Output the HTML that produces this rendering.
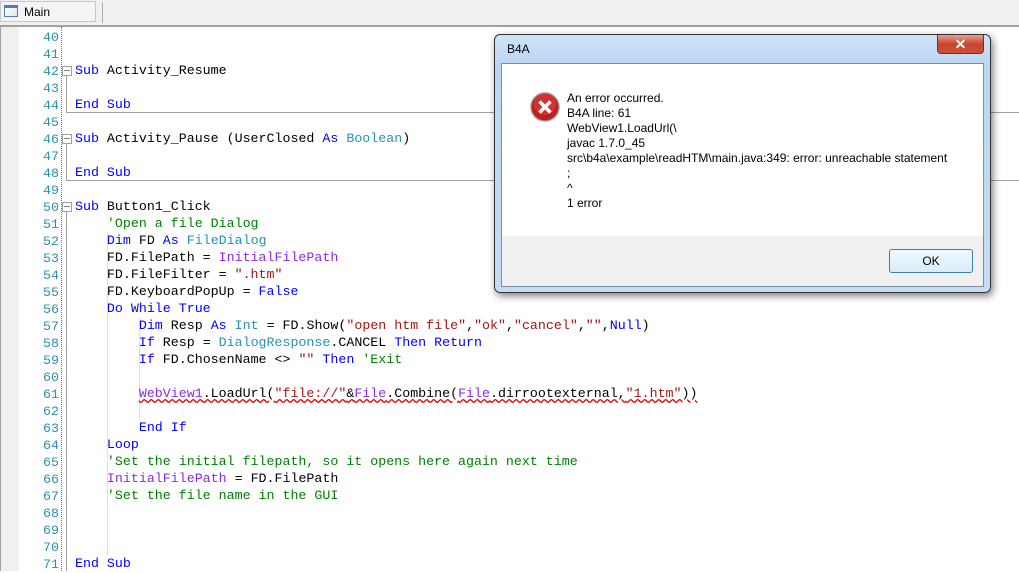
<!DOCTYPE html>
<html><head><meta charset="utf-8"><style>
body{margin:0;width:1019px;height:571px;overflow:hidden;background:#fff;position:relative;font-family:"Liberation Sans",sans-serif}
.tb{position:absolute;left:0;top:0;width:1019px;height:27px;background:#f0f0f0;border-bottom:2px solid #a0a0a0;box-sizing:border-box}
.tab{position:absolute;left:0;top:1px;width:96px;height:21px;border:1px solid #c8c8c8;background:#f4f4f4;box-sizing:border-box}
.tab span{position:absolute;left:23px;top:3px;font-size:12px;color:#000}
.tab i{position:absolute;left:3px;top:3px;width:14px;height:12px;border:1px solid #5a7ab0;border-top:3px solid #4a7ad0;background:linear-gradient(135deg,#fff,#dde4ee);box-sizing:border-box}
.strip{position:absolute;left:0;top:27px;width:19px;height:544px;background:#f0f0f0;border-left:1px solid #a0a0a0;box-sizing:border-box}
.ln{position:absolute;left:20px;width:39px;text-align:right;font:13.3px/17px "Liberation Mono",monospace;color:#2b91af}
.c{position:absolute;left:75px;font:13.3px/17px "Liberation Mono",monospace;color:#000;white-space:pre}
.dot{position:absolute;left:61px;top:27px;height:544px;border-left:1px dotted #2b9a9a}
.k{color:#0000ff}.t{color:#2b91af}.s{color:#a31515}.g{color:#008000}.p{color:#8a2be2}
.sep{position:absolute;left:66px;width:953px;border-top:1px solid #a0a0a0}
.vl{position:absolute;left:66px;border-left:1px solid #a0a0a0}
.fb{position:absolute;left:62px;width:8px;height:8px;border:1px solid #a0a0a0;background:#fff}
.fb:after{content:"";position:absolute;left:1px;top:3px;width:6px;border-top:1px solid #808080}
.ig{position:absolute;border-left:1px solid #e0e0e0}
.dlg{position:absolute;left:494px;top:34px;width:497px;height:259px;border-radius:6px;border:1px solid #333;background:linear-gradient(#cfe3f7,#bcd6f2 30px,#c5dcf3);box-shadow:2px 3px 8px rgba(0,0,0,.5);box-sizing:border-box}
.dlg .ti{position:absolute;left:12px;top:7px;font-size:12px}
.inner{position:absolute;left:6px;top:28px;width:483px;height:224px;background:#fff;border:1px solid #7a8fa8;box-sizing:border-box}
.bot{position:absolute;left:0;bottom:0;width:481px;height:50px;background:#f0f0f0}
.ok{position:absolute;left:387px;top:13px;width:84px;height:24px;border:1px solid #3c7fb1;border-radius:3px;background:linear-gradient(#f2f9fe,#d9ecf9);box-sizing:border-box;font-size:12px;text-align:center;line-height:22px}
.msg{position:absolute;left:65px;top:27px;font-size:12px;line-height:15px;color:#000;white-space:pre}
.x{position:absolute;left:442px;top:0;width:47px;height:19px;border:1px solid #7a2a22;border-top:none;border-radius:0 0 4px 4px;background:linear-gradient(#e8a090,#c9452f 50%,#d0503a);box-sizing:border-box;color:#fff;text-align:center;font:bold 14px/18px "Liberation Sans",sans-serif}
</style></head><body>
<div class="tb"><div class="tab"><i></i><span>Main</span></div><div style="position:absolute;left:102px;top:2px;height:21px;border-left:1px solid #b0b0b0"></div></div>
<div class="strip"></div>
<div class="dot"></div>
<div class="ln" style="top:29px">40<br>41<br>42<br>43<br>44<br>45<br>46<br>47<br>48<br>49<br>50<br>51<br>52<br>53<br>54<br>55<br>56<br>57<br>58<br>59<br>60<br>61<br>62<br>63<br>64<br>65<br>66<br>67<br>68<br>69<br>70<br>71</div>
<div class="fb" style="top:66px"></div><div class="vl" style="top:76px;height:36px"></div><div class="sep" style="top:112px"></div>
<div class="fb" style="top:134px"></div><div class="vl" style="top:144px;height:36px"></div><div class="sep" style="top:180px"></div>
<div class="fb" style="top:202px"></div><div class="vl" style="top:212px;height:359px"></div>
<div class="ig" style="left:107px;top:233px;height:320px"></div>
<div class="ig" style="left:139px;top:318px;height:100px"></div>
<div class="ig" style="left:107px;top:505px;height:50px"></div>
<div class="c" style="top:62px"><span class="k">Sub</span> Activity_Resume

<span class="k">End Sub</span>

<span class="k">Sub</span> Activity_Pause (UserClosed <span class="k">As</span> <span class="t">Boolean</span>)

<span class="k">End Sub</span>

<span class="k">Sub</span> Button1_Click
    <span class="g">'Open a file Dialog</span>
    <span class="k">Dim</span> FD <span class="k">As</span> <span class="t">FileDialog</span>
    FD.FilePath = <span class="p">InitialFilePath</span>
    FD.FileFilter = <span class="s">".htm"</span>
    FD.KeyboardPopUp = <span class="k">False</span>
    <span class="k">Do While True</span>
        <span class="k">Dim</span> Resp <span class="k">As</span> <span class="t">Int</span> = FD.Show(<span class="s">"open htm file"</span>,<span class="s">"ok"</span>,<span class="s">"cancel"</span>,<span class="s">""</span>,<span class="k">Null</span>)
        <span class="k">If</span> Resp = <span class="t">DialogResponse</span>.CANCEL <span class="k">Then Return</span>
        <span class="k">If</span> FD.ChosenName &lt;&gt; <span class="s">""</span> <span class="k">Then</span> <span class="g">'Exit</span>

        <span style="text-decoration:underline wavy #e00000"><span class="p">WebView1</span>.LoadUrl(<span class="s">"file://"</span>&amp;<span class="p">File</span>.Combine(<span class="p">File</span>.dirrootexternal,<span class="s">"1.htm"</span>))</span>

        <span class="k">End If</span>
    <span class="k">Loop</span>
    <span class="g">'Set the initial filepath, so it opens here again next time</span>
    <span class="p">InitialFilePath</span> = FD.FilePath
    <span class="g">'Set the file name in the GUI</span>



<span class="k">End Sub</span></div>
<div class="dlg"><div class="ti">B4A</div><div class="x">✕</div>
<div class="inner">
<svg style="position:absolute;left:28px;top:28px" width="30" height="30" viewBox="0 0 30 30"><circle cx="15" cy="15" r="14" fill="#c41c1c" stroke="#999" stroke-width="1.5"/><circle cx="15" cy="12" r="11" fill="#e04848" opacity=".5"/><path d="M9.5 9.5L20.5 20.5M20.5 9.5L9.5 20.5" stroke="#fff" stroke-width="3.5"/></svg>
<div class="msg">An error occurred.
B4A line: 61
WebView1.LoadUrl(\
javac 1.7.0_45
src\b4a\example\readHTM\main.java:349: error: unreachable statement
;
^
1 error</div>
<div class="bot"><div class="ok">OK</div></div>
</div></div>
</body></html>
